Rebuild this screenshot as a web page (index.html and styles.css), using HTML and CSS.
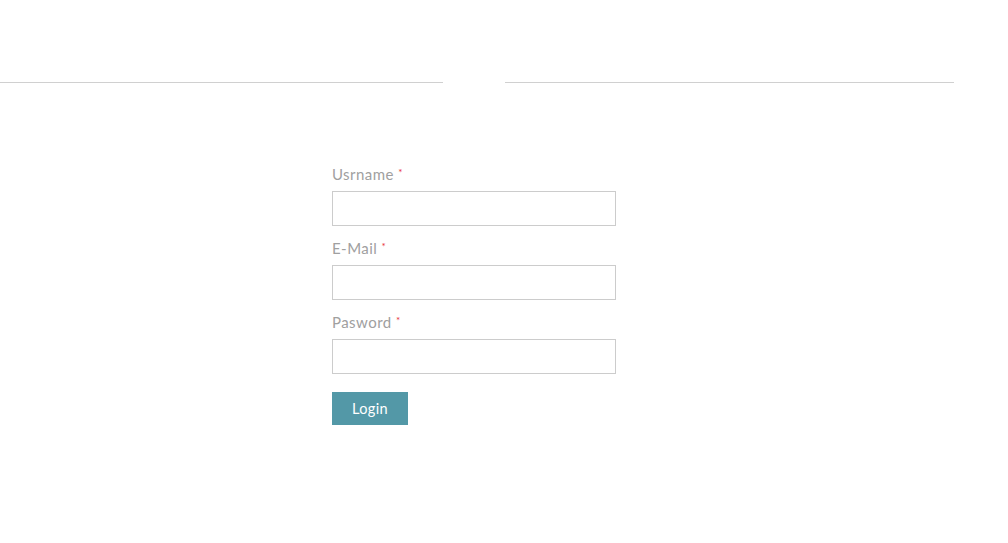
FILE: index.html
```html
<!DOCTYPE html>
<html>
<head>
<meta charset="utf-8">
<link rel="stylesheet" href="styles.css">
</head>
<body>
<div class="rule">
  <span class="rule-line left"></span>
  <span class="rule-gap"></span>
  <span class="rule-line right"></span>
</div>
<form class="login">
  <div class="field">
    <label class="label">Usrname <span class="req">*</span></label>
    <input class="input" type="text">
  </div>
  <div class="field">
    <label class="label">E-Mail <span class="req">*</span></label>
    <input class="input" type="text">
  </div>
  <div class="field">
    <label class="label">Pasword <span class="req">*</span></label>
    <input class="input" type="password">
  </div>
  <button class="btn" type="button">Login</button>
</form>
</body>
</html>
```
FILE: styles.css
```css
html, body {
  margin: 0;
  padding: 0;
  background: #fff;
  font-family: "Lato", "Open Sans", sans-serif;
}
.rule {
  display: flex;
  width: 954px;
  padding-top: 82px;
}
.rule-line {
  height: 1px;
  background: #d0d0d0;
}
.rule-line.left { width: 443px; }
.rule-gap { width: 62px; }
.rule-line.right { flex: 1; }
.login {
  display: flex;
  flex-direction: column;
  align-items: flex-start;
  margin: 81px 0 0 332px;
}
.field {
  display: flex;
  flex-direction: column;
  margin-bottom: 12px;
}
.label {
  font-size: 15px;
  line-height: 20px;
  height: 20px;
  color: #a0a0a0;
  margin-bottom: 7px;
  letter-spacing: 0.45px;
}
.req {
  color: #e8303a;
  font-size: 10px;
  line-height: 0;
  vertical-align: 4px;
}
.input {
  box-sizing: border-box;
  width: 284px;
  height: 35px;
  border: 1px solid #cccccc;
  background: #fff;
  margin: 0;
  padding: 0 8px;
  outline: none;
}
.btn {
  margin-top: 6px;
  width: 76px;
  height: 33px;
  border: none;
  background: #5398a7;
  color: #fff;
  font-family: "Lato", "Open Sans", sans-serif;
  font-size: 14.5px;
  letter-spacing: 0.4px;
  padding: 0;
  cursor: pointer;
}
```
